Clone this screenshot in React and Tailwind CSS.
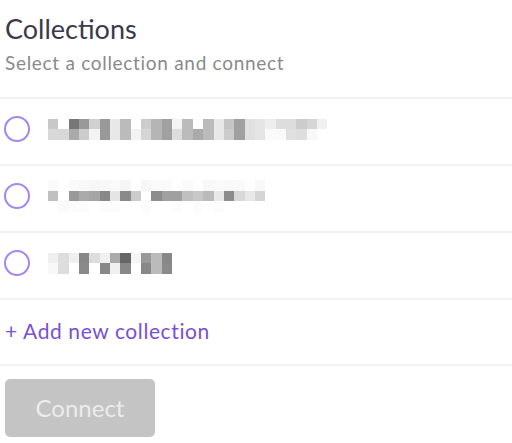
import React from "react";

const rows = [
  {
    lines: [
      ["#c8c8c8","#ffffff","#777777","#999999","#d0d0d0","#999999","#e8e8e8","#bbbbbb","#ffffff","#cccccc","#b5b5b5","#a0a0a0","#f3f3f3","#bbbbbb","#ffffff","#bbbbbb","#e8e8e8","#c5c5c5","#a0a0a0","#e0e0e0","#e5e5e5","#eeeeee","#dddddd","#dddddd","#cccccc","#d5d5d5","#f0f0f0"],
      ["#d8d8d8","#d8d8d8","#aaaaaa","#cccccc","#f3f3f3","#999999","#e8e8e8","#bbbbbb","#f3f3f3","#d5d5d5","#b5b5b5","#a0a0a0","#dddddd","#bbbbbb","#aaaaaa","#bbbbbb","#e8e8e8","#cccccc","#a0a0a0","#e0e0e0","#e5e5e5","#fafafa","#fafafa","#e0e0e0","#dddddd","#f8f8f8","#ffffff"],
    ],
  },
  {
    lines: [
      ["#fafafa","#ffffff","#fafafa","#f8f8f8","#f6f6f6","#f8f8f8","#fafafa","#f6f6f6","#ffffff","#f6f6f6","#fafafa","#fafafa","#ffffff","#fafafa","#ffffff","#f8f8f8","#fafafa","#f8f8f8","#fafafa","#ffffff","#f8f8f8"],
      ["#c0c0c0","#ffffff","#999999","#aaaaaa","#a5a5a5","#888888","#e5e5e5","#8a8a8a","#cccccc","#ffffff","#8c8c8c","#a0a0a0","#a0a0a0","#c0c0c0","#c8c8c8","#bbbbbb","#e8e8e8","#8c8c8c","#d8d8d8","#e8e8e8","#d5d5d5"],
      ["#ffffff","#fafafa","#fcfcfc","#fcfcfc","#ffffff","#fcfcfc","#fcfcfc","#ffffff","#ffffff","#fcfcfc","#ffffff","#ffffff","#fcfcfc","#ffffff","#fcfcfc","#ffffff","#fcfcfc","#ffffff","#ffffff","#ffffff","#ffffff"],
    ],
  },
  {
    lines: [
      ["#f0f0f0","#dddddd","#f0f0f0","#888888","#dddddd","#f0f0f0","#aaaaaa","#666666","#f5f5f5","#999999","#bbbbbb","#888888"],
      ["#f8f8f8","#dddddd","#ffffff","#8a8a8a","#ffffff","#888888","#f0f0f0","#888888","#ffffff","#888888","#bbbbbb","#8a8a8a"],
    ],
  },
];

function Mosaic({ lines }) {
  return (
    <div className="flex flex-col">
      {lines.map((line, i) => (
        <div key={i} className="flex">
          {line.map((c, j) => (
            <div key={j} className="w-[10.35px] h-[10.5px]" style={{ background: c }} />
          ))}
        </div>
      ))}
    </div>
  );
}

export default function App() {
  return (
    <div className="w-[512px] h-[443px] bg-white font-['Lato','Noto_Sans',sans-serif] overflow-hidden">
      <div className="h-[97px] px-[5px] pt-[13px]">
        <h2 className="text-[27px] leading-[31px] text-[#3a3a4c]">Collections</h2>
        <p className="mt-[7px] text-[19px] leading-[23px] tracking-[0.7px] text-[#8a8a8a]">Select a collection and connect</p>
      </div>
      {rows.map((r, i) => (
        <div key={i} className="h-[67px] border-t-2 border-[#f1f1f1] flex items-center pl-[4px] pb-[5px]">
          <div className="w-[26px] h-[26px] rounded-full border-2 border-[#a386f6] shrink-0" />
          <div className="ml-[18px]">
            <Mosaic lines={r.lines} />
          </div>
        </div>
      ))}
      <div className="h-[66px] border-t-2 border-[#f1f1f1] flex items-center px-[5px] pb-[3px]">
        <span className="text-[21px] tracking-[0.6px] text-[#7a4fd4]">+ Add new collection</span>
      </div>
      <div className="border-t-2 border-[#f1f1f1] px-[5px] pt-[13px]">
        <button className="w-[150px] h-[58px] rounded-[5px] bg-[#c4c4c4] text-[24px] text-[#ececec]">Connect</button>
      </div>
    </div>
  );
}
